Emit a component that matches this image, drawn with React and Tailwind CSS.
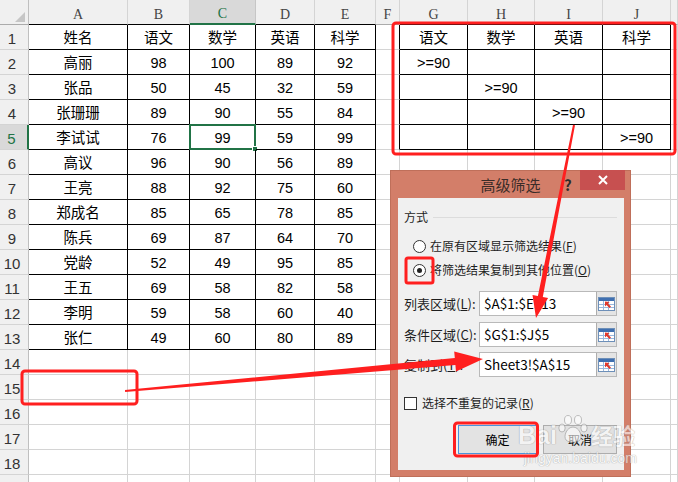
import React from 'react';

const COL_LETTERS = ['A', 'B', 'C', 'D', 'E', 'F', 'G', 'H', 'I', 'J', 'K'];
const ROWS = Array.from({ length: 19 }, (_, i) => i + 1);

const SCORES = [
  ['姓名', '语文', '数学', '英语', '科学'],
  ['高丽', '98', '100', '89', '92'],
  ['张品', '50', '45', '32', '59'],
  ['张珊珊', '89', '90', '55', '84'],
  ['李试试', '76', '99', '59', '99'],
  ['高议', '96', '90', '56', '89'],
  ['王亮', '88', '92', '75', '60'],
  ['郑成名', '85', '65', '78', '85'],
  ['陈兵', '69', '87', '64', '70'],
  ['党龄', '52', '49', '95', '85'],
  ['王五', '69', '58', '82', '58'],
  ['李明', '59', '58', '60', '40'],
  ['张仁', '49', '60', '80', '89'],
];

const CRITERIA = [
  ['语文', '数学', '英语', '科学'],
  ['>=90', '', '', ''],
  ['', '>=90', '', ''],
  ['', '', '>=90', ''],
  ['', '', '', '>=90'],
];

const inScores = (row, col) => col >= 1 && col <= 5 && row <= 13;
const inCriteria = (row, col) => col >= 7 && col <= 10 && row <= 5;

function cellValue(row, col) {
  if (inScores(row, col)) return SCORES[row - 1][col - 1];
  if (inCriteria(row, col)) return CRITERIA[row - 1][col - 7];
  return '';
}

function cellBorder(row, col) {
  if (inScores(row, col) || inCriteria(row, col)) return 'border-r border-b border-black';
  if (col === 6 && row <= 5) return 'border-r border-b border-r-black border-b-[#d4d4d4]';
  return 'border-r border-b border-[#d4d4d4]';
}

function ColHeader({ letter, col }) {
  let cls = 'bg-[#f0f0f0] text-[#444] border-r border-b border-r-[#d4d4d4] border-b-[#ababab]';
  if (letter === 'C') cls = 'bg-[#d9d9d9] text-[#217346] border-r border-b-2 border-r-[#c6c6c6] border-b-[#217346]';
  else if ((col >= 1 && col <= 5) || (col >= 7 && col <= 10)) cls = 'bg-[#f0f0f0] text-[#444] border-r border-b border-r-[#d4d4d4] border-b-black';
  // column K is only a sliver at the window edge, its letter is not visible
  return (
    <div className={`flex items-end justify-center pb-[2px] text-[14px] leading-none font-['Liberation_Serif',serif] ${cls}`}>
      {letter === 'K' ? '' : letter}
    </div>
  );
}

function RowHeader({ row }) {
  const active = row === 5;
  return (
    <div
      className={`flex items-end justify-center pr-[4px] pb-[3px] text-[15px] leading-none font-['Liberation_Sans',sans-serif] border-b border-b-[#d4d4d4] ${
        active ? 'bg-[#d9d9d9] text-[#217346] border-r-2 border-r-[#217346]' : 'bg-[#f0f0f0] text-[#333] border-r border-r-[#bfbfbf]'
      }`}
    >
      {row <= 18 ? row : ''}
    </div>
  );
}

function Cell({ row, col }) {
  const selected = row === 5 && col === 3;
  return (
    <div
      className={`relative flex items-center justify-center pt-[2px] text-[14.5px] leading-none text-black font-['Liberation_Sans','Noto_Sans_CJK_SC',sans-serif] ${cellBorder(row, col)}`}
    >
      {cellValue(row, col)}
      {selected && (
        <>
          <div className="absolute -left-[1px] -top-[1px] -right-[1px] -bottom-[1px] border-2 border-[#217346]" />
          <div className="absolute -right-[3px] -bottom-[3px] w-[6px] h-[6px] bg-[#217346] border border-white" />
        </>
      )}
    </div>
  );
}

function RangeIcon() {
  return (
    <svg width="17" height="14" viewBox="0 0 17 14">
      <rect x="0.5" y="0.5" width="16" height="13" fill="#fff" stroke="#6d8fb8" />
      <rect x="1" y="1" width="15" height="3" fill="#3f6fb0" />
      <path d="M1 7.5H16M1 10.5H16M5.5 4V13M10.5 4V13" stroke="#9bb8dc" strokeWidth="1" />
      <path d="M7 4.5 L7 9.5 L8.5 8 L11.5 11 L13 9.5 L10 6.5 L11.5 5 Z" fill="#e0392c" />
    </svg>
  );
}

function RangeField({ label, hotkey, value, className }) {
  return (
    <div className={`flex items-center h-[25px] ${className}`}>
      <div className="w-[75px] text-[13px] text-[#1e1e1e] whitespace-nowrap">
        {label}(<span className="underline">{hotkey}</span>):
      </div>
      <div className="flex h-full border border-[#b9b9b9]">
        <div className="w-[116px] bg-white flex items-center pl-[4px] text-[13.5px] text-black">{value}</div>
        <div className="w-[20px] border-l border-[#adadad] bg-[#e4e4e4] flex items-center justify-center">
          <RangeIcon />
        </div>
      </div>
    </div>
  );
}

function Radio({ checked, label, hotkey, className }) {
  return (
    <div className={`flex items-center h-[16px] pl-[9px] ${className}`}>
      <div className="w-[13px] h-[13px] rounded-full border border-[#333] bg-white flex items-center justify-center">
        {checked && <div className="w-[5px] h-[5px] rounded-full bg-[#222]" />}
      </div>
      <span className="ml-[4px] text-[12px] text-[#1e1e1e] whitespace-nowrap">
        {label}(<span className="underline">{hotkey}</span>)
      </span>
    </div>
  );
}

function FilterDialog() {
  return (
    <div className="absolute left-[390px] top-[170px] w-[241px] h-[307px] bg-[#d37e69] border border-[#bf6f5a] flex flex-col font-['Noto_Sans_CJK_SC',sans-serif] leading-none">
      <div className="relative h-[27px] flex items-center justify-center">
        <span className="text-[15px] text-[#3a2c28]">高级筛选</span>
        <span className="absolute left-[173px] top-[6px] text-[15px] font-bold text-[#2b2b2b]">?</span>
        <div className="absolute left-[189px] -top-[1px] w-[45px] h-[20px] bg-[#c75050] flex items-center justify-center">
          <svg width="10" height="10" viewBox="0 0 10 10">
            <path d="M1 1L9 9M9 1L1 9" stroke="#fff" strokeWidth="2" />
          </svg>
        </div>
      </div>
      <div className="ml-[7px] mr-[6px] h-[272px] bg-[#f0f0f0] flex flex-col pl-[6px] pr-[7px]">
        <div className="mt-[11px] h-[16px] flex items-center">
          <span className="text-[12px] text-[#1e1e1e]">方式</span>
          <div className="ml-[5px] flex-1 h-px bg-[#dcdcdc]" />
        </div>
        <Radio className="mt-[13px]" label="在原有区域显示筛选结果" hotkey="F" />
        <Radio className="mt-[8px]" checked label="将筛选结果复制到其他位置" hotkey="O" />
        <RangeField className="mt-[13px]" label="列表区域" hotkey="L" value="$A$1:$E$13" />
        <RangeField className="mt-[6px]" label="条件区域" hotkey="C" value="$G$1:$J$5" />
        <RangeField className="mt-[5px]" label="复制到" hotkey="T" value="Sheet3!$A$15" />
        <div className="mt-[18px] h-[16px] flex items-center">
          <div className="w-[13px] h-[13px] border border-[#333] bg-white" />
          <span className="ml-[5px] text-[12px] text-[#1e1e1e]">
            选择不重复的记录(<span className="underline">R</span>)
          </span>
        </div>
        <div className="mt-[14px] flex justify-end gap-[6px]">
          <div className="w-[79px] h-[29px] border border-[#4a94dc] bg-[#e3e3e3] flex items-center justify-center text-[12px] text-black">
            确定
          </div>
          <div className="w-[74px] h-[29px] border border-[#adadad] bg-[#e1e1e1] flex items-center justify-center text-[12px] text-black">
            取消
          </div>
        </div>
      </div>
    </div>
  );
}

function Watermark() {
  return (
    <div className="absolute left-[518px] top-[402px] w-[130px] h-[70px] opacity-60 pointer-events-none font-['Liberation_Sans','Noto_Sans_CJK_SC',sans-serif] text-white [text-shadow:0_0_1px_#8a8a8a,0_0_1px_#8a8a8a]">
      <div className="flex items-end h-[46px]">
        <span className="text-[25px] font-bold leading-none">Bai</span>
        <svg width="34" height="30" viewBox="0 0 34 30" className="mb-[4px]">
          <g fill="#fff" stroke="#9a9a9a" strokeWidth="1">
            <ellipse cx="11" cy="6" rx="3.5" ry="4.5" />
            <ellipse cx="21" cy="6" rx="3.5" ry="4.5" />
            <ellipse cx="5" cy="14" rx="3.2" ry="4" />
            <ellipse cx="27" cy="14" rx="3.2" ry="4" />
            <path d="M16 13 C10 13 6 22 9 26 C12 29 20 29 23 26 C26 22 22 13 16 13 Z" />
          </g>
        </svg>
        <span className="text-[22px] font-bold leading-none">经验</span>
      </div>
      <div className="mt-[3px] ml-[6px] text-[14px] leading-none">jingyan.baidu.com</div>
    </div>
  );
}

function Annotations() {
  return (
    <svg className="absolute left-0 top-0 pointer-events-none" width="678" height="482" viewBox="0 0 678 482">
      <g fill="none" stroke="#ff1f1f" strokeWidth="3">
        <rect x="393" y="23" width="282" height="131" rx="3" />
        <rect x="22" y="371" width="115" height="33" rx="3" />
        <rect x="406" y="258" width="27" height="25" rx="2" />
        <rect x="454.5" y="423" width="83" height="33" rx="3" />
      </g>
      <g fill="#ff1f1f">
        <polygon points="573,124.8 537.9,295.9 532.5,294.9 536,318 548.1,297.9 542.8,296.9 575,125.2" />
        <polygon points="125,390 454.8,358 454.2,351.5 483,359 456,371.5 455.4,365 125.1,392" />
      </g>
    </svg>
  );
}

export default function App() {
  return (
    <div className="relative w-[678px] h-[482px] overflow-hidden bg-white select-none">
      <div className="grid grid-cols-[29px_99px_62px_66px_59px_61px_24px_68px_67px_68px_68px_7px] auto-rows-[25px]">
        <div className="bg-[#f0f0f0] border-r border-b border-r-[#bfbfbf] border-b-[#ababab] flex items-end justify-end pr-[3px] pb-[2px]">
          <svg width="10" height="10" viewBox="0 0 10 10">
            <polygon points="0,10 10,10 10,0" fill="#c6c6c6" />
          </svg>
        </div>
        {COL_LETTERS.map((letter, i) => (
          <ColHeader key={letter} letter={letter} col={i + 1} />
        ))}
        {ROWS.map((row) => (
          <React.Fragment key={row}>
            <RowHeader row={row} />
            {COL_LETTERS.map((letter, i) => (
              <Cell key={letter} row={row} col={i + 1} />
            ))}
          </React.Fragment>
        ))}
      </div>
      <FilterDialog />
      <Watermark />
      <Annotations />
    </div>
  );
}
